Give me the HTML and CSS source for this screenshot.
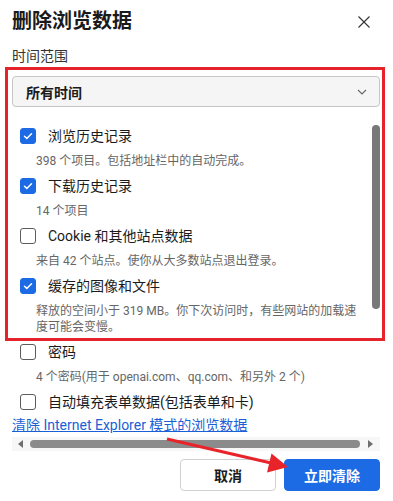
FILE: index.html
```html
<!DOCTYPE html>
<html lang="zh-CN">
<head>
<meta charset="utf-8">
<title>删除浏览数据</title>
<link rel="stylesheet" href="styles.css">
</head>
<body>
<div class="dialog">
  <header class="head">
    <h1 class="title">删除浏览数据</h1>
    <button class="close" aria-label="关闭">
      <svg width="12" height="12" viewBox="0 0 12 12"><path d="M0.5 0.5L11.5 11.5M11.5 0.5L0.5 11.5" stroke="#333" stroke-width="1.1" fill="none"/></svg>
    </button>
  </header>

  <div class="range-label">时间范围</div>
  <div class="select">
    <span>所有时间</span>
    <svg width="10" height="6" viewBox="0 0 10 6"><path d="M1 1l4 4 4-4" stroke="#666" stroke-width="1.1" fill="none"/></svg>
  </div>

  <div class="list">
    <div class="item">
      <div class="row"><span class="cb on"><svg width="16" height="16" viewBox="0 0 16 16"><path d="M4.5 8.2l2.3 2.3 4.7-4.8" stroke="#fff" stroke-width="1.5" fill="none" stroke-linecap="round" stroke-linejoin="round"/></svg></span><span class="label">浏览历史记录</span></div>
      <div class="sub">398 个项目。包括地址栏中的自动完成。</div>
    </div>
    <div class="item">
      <div class="row"><span class="cb on"><svg width="16" height="16" viewBox="0 0 16 16"><path d="M4.5 8.2l2.3 2.3 4.7-4.8" stroke="#fff" stroke-width="1.5" fill="none" stroke-linecap="round" stroke-linejoin="round"/></svg></span><span class="label">下载历史记录</span></div>
      <div class="sub">14 个项目</div>
    </div>
    <div class="item">
      <div class="row"><span class="cb"></span><span class="label">Cookie 和其他站点数据</span></div>
      <div class="sub">来自 42 个站点。使你从大多数站点退出登录。</div>
    </div>
    <div class="item">
      <div class="row"><span class="cb on"><svg width="16" height="16" viewBox="0 0 16 16"><path d="M4.5 8.2l2.3 2.3 4.7-4.8" stroke="#fff" stroke-width="1.5" fill="none" stroke-linecap="round" stroke-linejoin="round"/></svg></span><span class="label">缓存的图像和文件</span></div>
      <div class="sub">释放的空间小于 319 MB。你下次访问时，有些网站的加载速度可能会变慢。</div>
    </div>
    <div class="item">
      <div class="row"><span class="cb"></span><span class="label">密码</span></div>
      <div class="sub">4 个密码(用于 openai.com、qq.com、和另外 2 个)</div>
    </div>
    <div class="item">
      <div class="row"><span class="cb"></span><span class="label">自动填充表单数据(包括表单和卡)</span></div>
    </div>
  </div>

  <a class="link" href="#">清除 Internet Explorer 模式的浏览数据</a>

  <div class="hscroll">
    <span class="arrow-l"></span>
    <span class="hthumb"></span>
    <span class="arrow-r"></span>
  </div>

  <div class="actions">
    <button class="btn">取消</button>
    <button class="btn primary">立即清除</button>
  </div>

  <div class="vthumb"></div>
  <div class="annot-box"></div>
  <svg class="annot-arrow" width="393" height="501" viewBox="0 0 393 501">
    <line x1="167" y1="439" x2="271" y2="463" stroke="#e8242a" stroke-width="3"/>
    <polygon points="288,467 271.5,453.5 267,472.5" fill="#e8242a"/>
  </svg>
</div>
</body>
</html>
```

FILE: styles.css
```css
* { box-sizing: border-box; }

html, body {
  margin: 0;
  padding: 0;
  background: #fff;
}

body {
  font-family: Roboto, "Noto Sans CJK SC", sans-serif;
  color: #1b1b1b;
  width: 393px;
  height: 501px;
  overflow: hidden;
}

.dialog {
  position: relative;
  width: 393px;
  height: 501px;
  padding: 7px 13px 0 12px;
}

.head {
  display: flex;
  align-items: center;
  justify-content: space-between;
  height: 28px;
}

.title {
  margin: 0;
  font-size: 20px;
  line-height: 28px;
  font-weight: 700;
  color: #1a1a1a;
}

.close {
  border: 0;
  background: none;
  padding: 0;
  width: 12px;
  height: 12px;
  margin-right: 10px;
  margin-top: 2px;
  display: flex;
}

.range-label {
  margin-top: 11px;
  font-size: 14px;
  line-height: 20px;
  color: #333;
}

.select {
  margin-top: 10px;
  height: 31px;
  background: #f5f5f5;
  border: 1px solid #c6c6c6;
  border-radius: 4px;
  display: flex;
  align-items: center;
  justify-content: space-between;
  padding: 0 12px 0 13px;
  font-size: 14px;
  font-weight: 700;
  color: #1b1b1b;
}

.list {
  margin-top: 17px;
}

.item {
  margin-bottom: 5px;
}

.item:last-child {
  margin-bottom: 0;
}

.row {
  display: flex;
  align-items: center;
  height: 24px;
  padding-left: 8px;
}

.cb {
  width: 16px;
  height: 16px;
  border: 1px solid #5c5c5c;
  border-radius: 3px;
  flex: none;
  display: flex;
}

.cb.on {
  background: #1d6ae5;
  border-color: #1d6ae5;
}

.cb.on svg {
  margin: -1px;
}

.label {
  margin-left: 12px;
  font-size: 14px;
  line-height: 24px;
  color: #1b1b1b;
  white-space: nowrap;
}

.sub {
  margin-top: 5px;
  padding-left: 24px;
  max-width: 350px;
  font-size: 12px;
  line-height: 16px;
  color: #666;
}

.link {
  display: block;
  margin-top: 1px;
  font-size: 14px;
  line-height: 20px;
  color: #1a5fd6;
  text-decoration: underline;
  white-space: nowrap;
}

.hscroll {
  margin-top: 2px;
  height: 14px;
  background: #f7f7f7;
  display: flex;
  align-items: center;
  padding: 0 7px 0 6px;
}

.arrow-l {
  width: 0;
  height: 0;
  border-top: 4px solid transparent;
  border-bottom: 4px solid transparent;
  border-right: 5px solid #6e6e6e;
}

.arrow-r {
  width: 0;
  height: 0;
  border-top: 4px solid transparent;
  border-bottom: 4px solid transparent;
  border-left: 5px solid #6e6e6e;
}

.hthumb {
  flex: 1;
  height: 8px;
  margin: 0 8px 0 7px;
  background: #8b8b8b;
  border-radius: 4px;
}

.actions {
  margin-top: 8px;
  display: flex;
  justify-content: flex-end;
  gap: 8px;
}

.btn {
  width: 96px;
  height: 32px;
  border: 1px solid #d1d1d1;
  border-radius: 4px;
  background: #fff;
  font-family: "Noto Sans CJK SC", sans-serif;
  font-size: 14px;
  font-weight: 700;
  color: #1b1b1b;
  padding: 0;
}

.btn.primary {
  background: #1d6ae5;
  border-color: #1d6ae5;
  color: #fff;
}

.vthumb {
  position: absolute;
  left: 372px;
  top: 125px;
  width: 8px;
  height: 184px;
  background: #787878;
  border-radius: 4px;
}

.annot-box {
  position: absolute;
  left: 5px;
  top: 67px;
  width: 380px;
  height: 274px;
  border: 3px solid #e5232b;
  pointer-events: none;
}

.annot-arrow {
  position: absolute;
  left: 0;
  top: 0;
  pointer-events: none;
}
```
